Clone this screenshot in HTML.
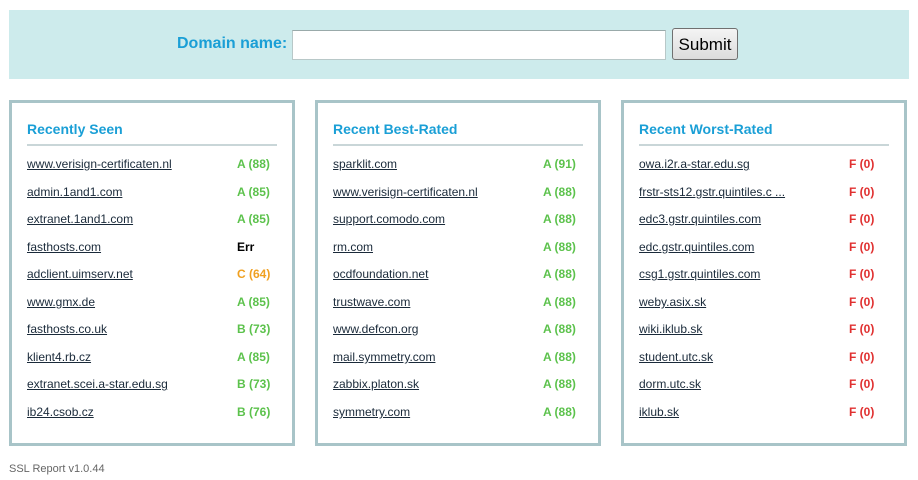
<!DOCTYPE html>
<html><head><meta charset="utf-8"><style>
body{margin:0;background:#fff;font-family:"Liberation Sans",Arial,sans-serif;width:918px;height:480px;position:relative;overflow:hidden}
.top{position:absolute;left:9px;top:10px;width:900px;height:69px;background:#cdebec}
.lbl{position:absolute;left:177px;top:35px;font-size:16px;font-weight:bold;color:#1a9fd6}
.inp{position:absolute;left:292px;top:30px;width:372px;height:28px;background:#fff;border:1px solid #b8c8c8;border-top-color:#9aa}
.btn{position:absolute;left:672px;top:28px;width:66px;height:32px;border:1px solid #707070;border-radius:3px;background:linear-gradient(#f4f4f4,#dcdcdc);font-size:17px;color:#000;text-align:center;line-height:32px;box-sizing:border-box}
.box{position:absolute;top:100px;width:280px;height:340px;border:3px solid #a8c4c8;background:#fff}
.box h2{position:absolute;left:15px;top:18px;margin:0;font-size:14px;font-weight:bold;color:#1a9fd6}
.box .ln{position:absolute;left:15px;top:41px;width:250px;height:2px;background:#c9d6d8}
.row{position:absolute;left:15px;width:250px;font-size:12px;height:16px}
.row a{color:#1a2a3a;text-decoration:underline}
.row b{position:absolute;left:210px;top:0}
.g{color:#5cc24c}.r{color:#e03030}.o{color:#f0a020}.k{color:#000}
.foot{position:absolute;left:9px;top:463px;font-size:11px;color:#666}
</style></head><body>
<div class="top"></div>
<div class="lbl">Domain name:</div>
<div class="inp"></div>
<div class="btn">Submit</div>

<div class="box" style="left:9px">
<h2>Recently Seen</h2><div class="ln"></div>
<div class="row" style="top:54px"><a>www.verisign-certificaten.nl</a><b class="g">A (88)</b></div>
<div class="row" style="top:82px"><a>admin.1and1.com</a><b class="g">A (85)</b></div>
<div class="row" style="top:109px"><a>extranet.1and1.com</a><b class="g">A (85)</b></div>
<div class="row" style="top:137px"><a>fasthosts.com</a><b class="k">Err</b></div>
<div class="row" style="top:164px"><a>adclient.uimserv.net</a><b class="o">C (64)</b></div>
<div class="row" style="top:192px"><a>www.gmx.de</a><b class="g">A (85)</b></div>
<div class="row" style="top:219px"><a>fasthosts.co.uk</a><b class="g">B (73)</b></div>
<div class="row" style="top:247px"><a>klient4.rb.cz</a><b class="g">A (85)</b></div>
<div class="row" style="top:274px"><a>extranet.scei.a-star.edu.sg</a><b class="g">B (73)</b></div>
<div class="row" style="top:302px"><a>ib24.csob.cz</a><b class="g">B (76)</b></div>
</div>

<div class="box" style="left:315px">
<h2>Recent Best-Rated</h2><div class="ln"></div>
<div class="row" style="top:54px"><a>sparklit.com</a><b class="g">A (91)</b></div>
<div class="row" style="top:82px"><a>www.verisign-certificaten.nl</a><b class="g">A (88)</b></div>
<div class="row" style="top:109px"><a>support.comodo.com</a><b class="g">A (88)</b></div>
<div class="row" style="top:137px"><a>rm.com</a><b class="g">A (88)</b></div>
<div class="row" style="top:164px"><a>ocdfoundation.net</a><b class="g">A (88)</b></div>
<div class="row" style="top:192px"><a>trustwave.com</a><b class="g">A (88)</b></div>
<div class="row" style="top:219px"><a>www.defcon.org</a><b class="g">A (88)</b></div>
<div class="row" style="top:247px"><a>mail.symmetry.com</a><b class="g">A (88)</b></div>
<div class="row" style="top:274px"><a>zabbix.platon.sk</a><b class="g">A (88)</b></div>
<div class="row" style="top:302px"><a>symmetry.com</a><b class="g">A (88)</b></div>
</div>

<div class="box" style="left:621px">
<h2>Recent Worst-Rated</h2><div class="ln"></div>
<div class="row" style="top:54px"><a>owa.i2r.a-star.edu.sg</a><b class="r">F (0)</b></div>
<div class="row" style="top:82px"><a>frstr-sts12.gstr.quintiles.c ...</a><b class="r">F (0)</b></div>
<div class="row" style="top:109px"><a>edc3.gstr.quintiles.com</a><b class="r">F (0)</b></div>
<div class="row" style="top:137px"><a>edc.gstr.quintiles.com</a><b class="r">F (0)</b></div>
<div class="row" style="top:164px"><a>csg1.gstr.quintiles.com</a><b class="r">F (0)</b></div>
<div class="row" style="top:192px"><a>weby.asix.sk</a><b class="r">F (0)</b></div>
<div class="row" style="top:219px"><a>wiki.iklub.sk</a><b class="r">F (0)</b></div>
<div class="row" style="top:247px"><a>student.utc.sk</a><b class="r">F (0)</b></div>
<div class="row" style="top:274px"><a>dorm.utc.sk</a><b class="r">F (0)</b></div>
<div class="row" style="top:302px"><a>iklub.sk</a><b class="r">F (0)</b></div>
</div>

<div class="foot">SSL Report v1.0.44</div>
</body></html>
